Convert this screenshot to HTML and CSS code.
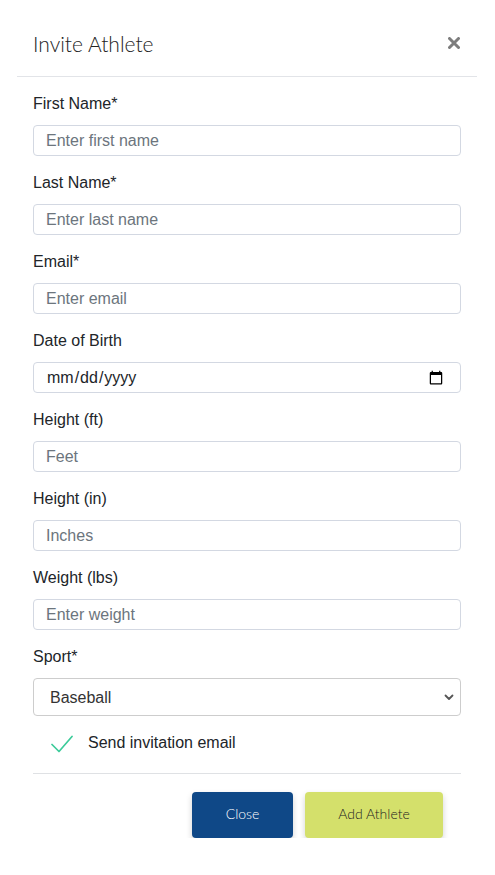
FILE: index.html
```html
<!DOCTYPE html>
<html lang="en">
<head>
<meta charset="utf-8">
<title>Invite Athlete</title>
<link rel="stylesheet" href="styles.css">
</head>
<body>
<div class="modal">
  <div class="modal-header">
    <h2 class="modal-title">Invite Athlete</h2>
    <button class="close" type="button" aria-label="Close">
      <svg width="12" height="12" viewBox="0 0 12 12"><path d="M1.5 1.5 L10.5 10.5 M10.5 1.5 L1.5 10.5" stroke="#7d7d7d" stroke-width="3" stroke-linecap="round"/></svg>
    </button>
  </div>
  <form class="modal-body">
    <div class="field">
      <label class="label">First Name*</label>
      <input class="control" type="text" placeholder="Enter first name">
    </div>
    <div class="field">
      <label class="label">Last Name*</label>
      <input class="control" type="text" placeholder="Enter last name">
    </div>
    <div class="field">
      <label class="label">Email*</label>
      <input class="control" type="email" placeholder="Enter email">
    </div>
    <div class="field">
      <label class="label">Date of Birth</label>
      <input class="control date" type="date">
    </div>
    <div class="field">
      <label class="label">Height (ft)</label>
      <input class="control" type="text" placeholder="Feet">
    </div>
    <div class="field">
      <label class="label">Height (in)</label>
      <input class="control" type="text" placeholder="Inches">
    </div>
    <div class="field">
      <label class="label">Weight (lbs)</label>
      <input class="control" type="text" placeholder="Enter weight">
    </div>
    <div class="field">
      <label class="label">Sport*</label>
      <div class="select-wrap">
        <select class="select">
          <option>Baseball</option>
        </select>
        <svg class="chevron" width="10" height="7" viewBox="0 0 10 7"><path d="M1.5 1.5 L5 5 L8.5 1.5" fill="none" stroke="#555" stroke-width="1.8" stroke-linecap="round" stroke-linejoin="round"/></svg>
      </div>
    </div>
    <div class="check-row">
      <svg class="check" width="22" height="18" viewBox="0 0 22 18"><path d="M1 9.5 L8 16.5 L21 1.5" fill="none" stroke="#3ccb9a" stroke-width="1.7" stroke-linecap="round" stroke-linejoin="round"/></svg>
      <span class="check-label">Send invitation email</span>
    </div>
    <div class="footer">
      <button class="btn btn-close" type="button">Close</button>
      <button class="btn btn-add" type="button">Add Athlete</button>
    </div>
  </form>
</div>
</body>
</html>
```
FILE: styles.css
```css
* { box-sizing: border-box; }
html, body { margin: 0; padding: 0; background: #fff; }
body {
  font-family: "Liberation Sans", Arial, sans-serif;
  color: #212529;
  width: 495px;
}
.modal { width: 495px; }
.modal-header {
  margin: 0 18px 0 17px;
  padding: 30px 16px 18px 16px;
  border-bottom: 1px solid #e2e4e8;
  display: flex;
  align-items: center;
  justify-content: space-between;
}
.modal-title {
  margin: 0;
  font-family: "Lato", "DejaVu Sans", sans-serif;
  font-weight: 300;
  font-size: 21px;
  line-height: 28px;
  color: #222;
  letter-spacing: 0;
}
.close {
  border: 0;
  background: none;
  padding: 0;
  margin: 0 1px 3px 0;
  width: 12px;
  height: 12px;
  display: flex;
}
.modal-body {
  padding: 16px 34px 0 33px;
  display: flex;
  flex-direction: column;
  gap: 16px;
  margin: 0;
}
.field {
  display: flex;
  flex-direction: column;
  gap: 10px;
}
.label {
  font-size: 16px;
  line-height: 22px;
  color: #212529;
}
.control {
  width: 100%;
  height: 31px;
  border: 1px solid #d3d8e2;
  border-radius: 4px;
  padding: 0 12px;
  font-family: "Liberation Sans", Arial, sans-serif;
  font-size: 16px;
  color: #212529;
  background: #fff;
  outline: none;
}
.control::placeholder { color: #6c757d; }
.date { padding-right: 14px; }
.select-wrap { position: relative; }
.select {
  width: 100%;
  height: 38px;
  border: 1px solid #cdcdcd;
  border-radius: 4px;
  padding: 0 30px 0 16px;
  font-family: "Liberation Sans", Arial, sans-serif;
  font-size: 16px;
  color: #333;
  background: #fff;
  appearance: none;
  -webkit-appearance: none;
  outline: none;
}
.chevron {
  position: absolute;
  right: 7px;
  top: 16px;
  pointer-events: none;
}
.check-row {
  display: flex;
  align-items: center;
  gap: 15px;
  padding-left: 18px;
  height: 22px;
}
.check { display: block; margin-top: 2px; }
.check-label {
  font-size: 16px;
  line-height: 20px;
  color: #212529;
}
.footer {
  margin-top: 3px;
  border-top: 1px solid #dfe1e4;
  padding: 18px 18px 0 0;
  display: flex;
  justify-content: flex-end;
  gap: 12px;
}
.btn {
  height: 46px;
  border: 0;
  border-radius: 4px;
  font-family: "Lato", "DejaVu Sans", sans-serif;
  font-weight: 300;
  font-size: 14px;
  box-shadow: 0 3px 6px rgba(0, 0, 0, 0.18);
  padding: 0 0 3px 0;
}
.btn-close {
  width: 101px;
  background: #0f4887;
  color: #fff;
}
.btn-add {
  width: 138px;
  background: #d4e06b;
  color: #222;
}
```
